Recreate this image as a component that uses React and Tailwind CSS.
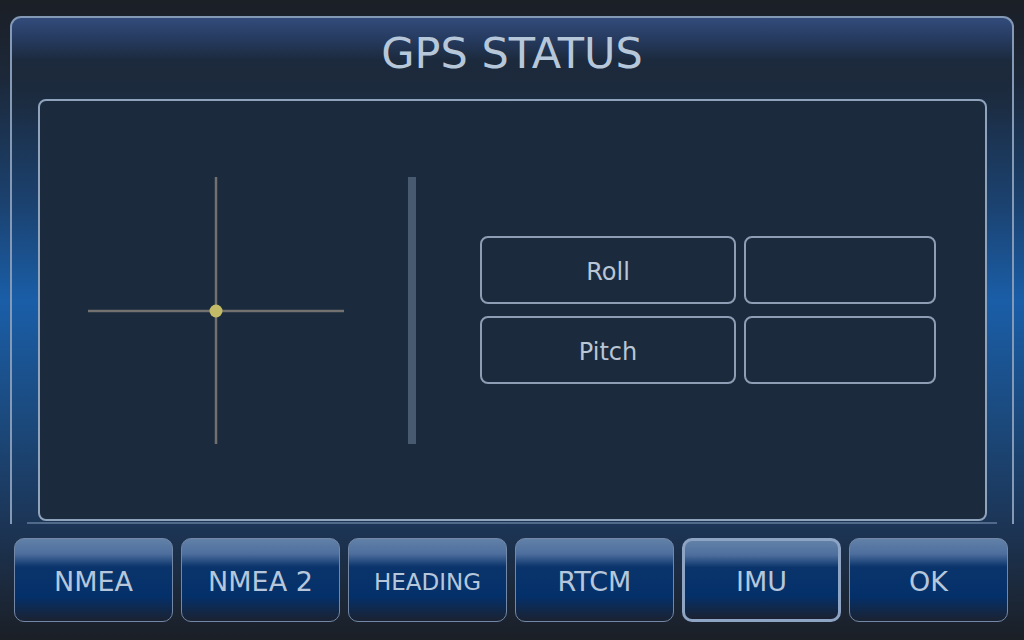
import React from "react";

const tabs = [
  { label: "NMEA" },
  { label: "NMEA 2" },
  { label: "HEADING", small: true },
  { label: "RTCM" },
  { label: "IMU", active: true },
  { label: "OK" },
];

const Crosshair = () => (
  <svg width="256" height="267" viewBox="0 0 256 267" className="shrink-0">
    <line x1="0" y1="134" x2="256" y2="134" stroke="#727170" strokeWidth="2.5" />
    <line x1="128" y1="0" x2="128" y2="267" stroke="#727170" strokeWidth="2.5" />
    <circle cx="128" cy="134" r="6.5" fill="#c3bb68" />
  </svg>
);

const ValueBox = ({ children, wide }) => (
  <div
    className={`h-[68px] pt-[3px] ${wide ? "w-[256px]" : "w-[192px]"} flex items-center justify-center rounded-[8px] border-2 border-[#8e9db3] text-[24px] text-[#b9c6d6]`}
  >
    {children}
  </div>
);

const TabButton = ({ label, small, active }) => (
  <button
    className={`h-[84px] pt-[4px] flex items-center justify-center rounded-[10px] bg-[linear-gradient(to_bottom,#6281a8_0%,#4e6f9e_18%,#0a346b_34%,#04306a_70%,#1b2231_100%)] text-[#b6c7dc] ${
      active ? "border-[3px] border-[#8ea4c4]" : "border border-[#7388a6]"
    } ${small ? "text-[23px]" : "text-[27px]"}`}
  >
    {label}
  </button>
);

export default function App() {
  return (
    <div
      className="w-[1024px] h-[640px] overflow-hidden flex flex-col bg-[linear-gradient(to_bottom,#1b1f26_0%,#1c2839_12%,#1b4270_32%,#1a5ea8_47%,#1b4a7e_65%,#1c3556_82%,#1b1f26_100%)]"
      style={{ fontFamily: '"DejaVu Sans", Verdana, sans-serif' }}
    >
      <div className="mx-[10px] mt-[16px] h-[508px] flex flex-col rounded-t-[11px] border-2 border-b-0 border-[#8399b6] bg-[linear-gradient(to_bottom,#324b7b_0px,#263a5e_22px,#1c2a3d_42px,rgba(28,42,61,0)_110px)]">
        <div className="h-[81px] pb-[10px] flex items-center justify-center text-[43px] text-[#b7c7da]">
          GPS STATUS
        </div>
        <div className="ml-[26px] mr-[25px] h-[422px] flex items-center rounded-[8px] border-2 border-[#8fa3bd] bg-[#1b2a3c]">
          <div className="ml-[48px]">
            <Crosshair />
          </div>
          <div className="ml-[64px] w-[8px] h-[267px] bg-[#475a6f]" />
          <div className="ml-[64px] flex flex-col gap-[12px]">
            <div className="flex gap-[8px]">
              <ValueBox wide>Roll</ValueBox>
              <ValueBox />
            </div>
            <div className="flex gap-[8px]">
              <ValueBox wide>Pitch</ValueBox>
              <ValueBox />
            </div>
          </div>
        </div>
        <div className="mt-auto mx-[15px] h-[2px] bg-[#526a8a]" />
      </div>
      <div className="mt-[14px] pl-[14px] pr-[16px] grid grid-cols-6 gap-[8px]">
        {tabs.map((t) => (
          <TabButton key={t.label} {...t} />
        ))}
      </div>
    </div>
  );
}
